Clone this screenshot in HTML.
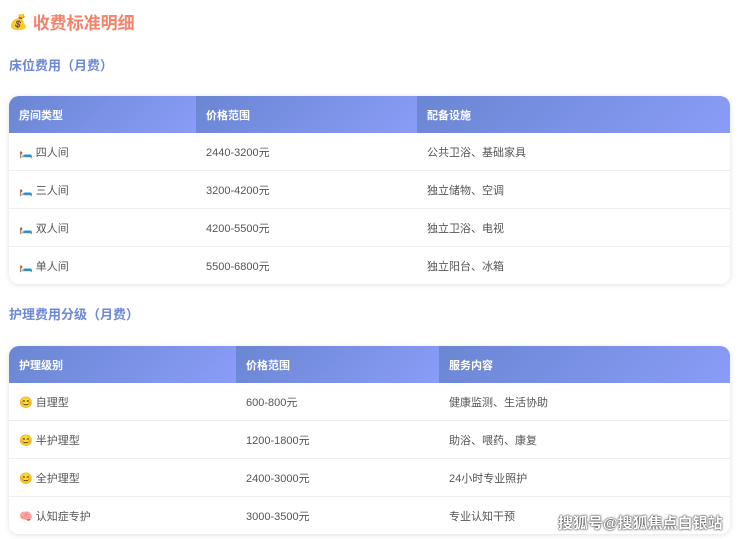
<!DOCTYPE html>
<html><head><meta charset="utf-8"><style>
body{margin:0;width:740px;height:539px;background:#fff;font-family:"Liberation Sans","Noto Sans CJK SC",sans-serif;overflow:hidden;position:relative}
.t{position:absolute;left:9px;top:9px;font-size:17px;font-weight:bold;color:#f5826a;display:flex;align-items:center}
.s{position:absolute;left:9px;font-size:13px;font-weight:bold;color:#6d88d6}
table{position:absolute;left:9px;width:721px;border-collapse:separate;border-spacing:0;border-radius:10px;overflow:hidden;box-shadow:0 1px 6px rgba(0,0,0,.12);font-size:11px;color:#555}
th{height:37px;text-align:left;padding:0 0 0 10px;color:#fff;font-weight:bold;background:linear-gradient(135deg,#6a86d2,#8a9cf8)}
td{height:37px;padding:0 0 0 10px;border-top:1px solid #eee;background:#fff}
tr:nth-child(2) td{border-top:none}
.wm{position:absolute;left:558px;top:512px;font-size:15px;color:#fff;font-weight:bold;text-shadow:0 0 2px #333,0 0 1px #000}
</style></head><body>
<div class="t"><span style="font-size:15px;margin-right:5px">💰</span>收费标准明细</div>
<div class="s" style="top:55px">床位费用（月费）</div>
<table style="top:96px">
<tr><th style="width:177px">房间类型</th><th style="width:211px">价格范围</th><th>配备设施</th></tr>
<tr><td>🛏️ 四人间</td><td>2440-3200元</td><td>公共卫浴、基础家具</td></tr>
<tr><td>🛏️ 三人间</td><td>3200-4200元</td><td>独立储物、空调</td></tr>
<tr><td>🛏️ 双人间</td><td>4200-5500元</td><td>独立卫浴、电视</td></tr>
<tr><td>🛏️ 单人间</td><td>5500-6800元</td><td>独立阳台、冰箱</td></tr>
</table>
<div class="s" style="top:304px">护理费用分级（月费）</div>
<table style="top:346px">
<tr><th style="width:217px">护理级别</th><th style="width:193px">价格范围</th><th>服务内容</th></tr>
<tr><td>😊 自理型</td><td>600-800元</td><td>健康监测、生活协助</td></tr>
<tr><td>😊 半护理型</td><td>1200-1800元</td><td>助浴、喂药、康复</td></tr>
<tr><td>😊 全护理型</td><td>2400-3000元</td><td>24小时专业照护</td></tr>
<tr><td>🧠 认知症专护</td><td>3000-3500元</td><td>专业认知干预</td></tr>
</table>
<div class="wm">搜狐号@搜狐焦点白银站</div>
</body></html>
